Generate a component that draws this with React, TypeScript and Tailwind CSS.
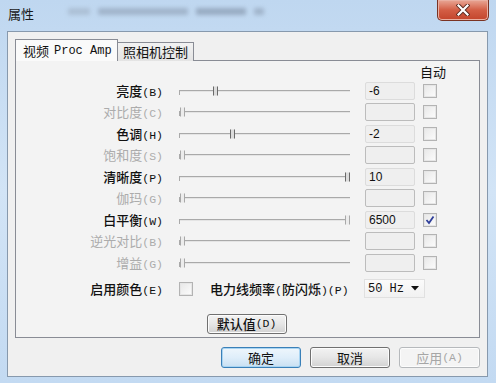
import React from "react";

type Row = {
  zh: string;
  k: string;
  enabled: boolean;
  thumb: number;
  value?: string;
  auto?: boolean;
  thumbLight?: boolean;
};

const rows: Row[] = [
  { zh: "亮度", k: "B", enabled: true, thumb: 36, value: "-6" },
  { zh: "对比度", k: "C", enabled: false, thumb: 3 },
  { zh: "色调", k: "H", enabled: true, thumb: 53, value: "-2" },
  { zh: "饱和度", k: "S", enabled: false, thumb: 3 },
  { zh: "清晰度", k: "P", enabled: true, thumb: 168, value: "10" },
  { zh: "伽玛", k: "G", enabled: false, thumb: 3 },
  { zh: "白平衡", k: "W", enabled: true, thumb: 168, value: "6500", auto: true, thumbLight: true },
  { zh: "逆光对比", k: "B", enabled: false, thumb: 3 },
  { zh: "增益", k: "G", enabled: false, thumb: 3 },
];

function Label({ zh, k, enabled }: { zh: string; k: string; enabled: boolean }) {
  return (
    <span
      className={
        "whitespace-nowrap " + (enabled ? "text-[#111111] font-medium" : "text-[#acacac]")
      }
    >
      <span className="text-[13px] font-['Noto_Sans_CJK_SC','Noto_Sans',sans-serif]">{zh}</span>
      <span className="text-[11.5px] font-['Liberation_Mono',monospace]">({k})</span>
    </span>
  );
}

function Slider({ pos, enabled, light }: { pos: number; enabled: boolean; light?: boolean }) {
  const dark = enabled && !light;
  return (
    <div className="relative h-full w-[174px] flex items-center">
      <div className="ml-[2px] w-[171px] h-[2px] border-t border-[#a9a9a9] bg-[#e4e4e4]" />
      <div className="absolute left-[2px] top-1/2 w-px h-[4px] bg-[#a9a9a9]" />
      <div
        className={
          "absolute top-1/2 -translate-y-1/2 w-[5px] h-[9px] border-x " +
          (dark ? "border-[#6a6a6a] bg-[#dcdcdc]" : "border-[#a8a8a8] bg-[#ececec]")
        }
        style={{ left: pos }}
      />
    </div>
  );
}

function Check({ checked }: { checked?: boolean }) {
  return (
    <div className="w-[14px] h-[14px] border border-[#b3b3b3] bg-[#f6f6f6] flex items-center justify-center">
      <div className="w-[12px] h-[12px] border border-[#e6e6e6] bg-gradient-to-br from-[#e9e9e9] to-[#fbfbfb] flex items-center justify-center">
        {checked && (
          <svg width="10" height="10" viewBox="0 0 10 10">
            <path d="M1.5 5 L4 8 L8.5 1.5" stroke="#2f3f9a" strokeWidth="1.8" fill="none" />
          </svg>
        )}
      </div>
    </div>
  );
}

function Btn({
  children,
  primary,
  disabled,
  w,
}: {
  children: React.ReactNode;
  primary?: boolean;
  disabled?: boolean;
  w: string;
}) {
  const border = primary
    ? "border-[#3a80b8]"
    : disabled
    ? "border-[#b6b9bc]"
    : "border-[#707070]";
  const bg = disabled
    ? "bg-[#f4f4f4]"
    : primary
    ? "bg-gradient-to-b from-[#eef6fc] via-[#dfeefa] to-[#c9e0f2]"
    : "bg-gradient-to-b from-[#f3f3f3] via-[#e6e6e6] to-[#d2d2d2]";
  return (
    <div
      className={`${w} h-[21px] rounded-[3px] border ${border} ${bg} flex items-center justify-center text-[13px] font-['Noto_Sans_CJK_SC','Noto_Sans',sans-serif] ${
        disabled ? "text-[#a6a6a6]" : "text-[#111111]"
      } ${primary ? "shadow-[inset_0_0_0_1px_#a8d4f2]" : "shadow-[inset_0_0_0_1px_#fcfcfc]"}`}
    >
      {children}
    </div>
  );
}

export default function App() {
  return (
    <div className="w-[496px] h-[383px] overflow-hidden bg-gradient-to-b from-[#bfd7f0] via-[#d2e4f6] to-[#c3daf2] flex flex-col font-['Noto_Sans_CJK_SC','Noto_Sans',sans-serif]">
      {/* Title bar */}
      <div className="h-[31px] flex items-start relative">
        <div className="ml-[8px] mt-[5px] text-[13px] text-[#1a1a1a] leading-[18px]">属性</div>
        <div className="ml-[34px] mt-[8px] flex items-center gap-[8px] blur-[2px] opacity-60">
          <div className="w-[22px] h-[7px] bg-[#9fb0c4]" />
          <div className="w-[90px] h-[7px] bg-[#8c9db2]" />
          <div className="w-[50px] h-[7px] bg-[#7d8ea3]" />
          <div className="w-[10px] h-[7px] bg-[#8c9db2]" />
        </div>
        <div className="ml-auto mr-[7px] w-[52px] h-[21px] rounded-b-[5px] border border-t-0 border-[#7a3323] bg-gradient-to-b from-[#e8a796] via-[#d35e45] to-[#c3442b] flex items-center justify-center shadow-[inset_0_0_0_1px_#eab0a2]">
          <svg width="14" height="12" viewBox="0 0 14 12">
            <path d="M2.5 1.5 L11.5 10.5 M11.5 1.5 L2.5 10.5" stroke="#5a2a20" strokeWidth="4" strokeLinecap="square" />
            <path d="M2.5 1.5 L11.5 10.5 M11.5 1.5 L2.5 10.5" stroke="#ffffff" strokeWidth="2.2" strokeLinecap="square" />
          </svg>
        </div>
      </div>

      {/* Client area */}
      <div className="ml-[7px] mr-[8px] h-[346px] border border-[#8799ad] bg-[#f0f0f0] flex flex-col pl-[7px] pr-[7px]">
        {/* Tabs */}
        <div className="mt-[7px] h-[22px] flex items-end relative z-10 -mb-px">
          <div className="w-[103px] h-[22px] border border-b-0 border-[#898c95] bg-[#fafafa] flex items-center pl-[7px] text-[#111111]">
            <span className="text-[13px]">视频</span>
            <span className="ml-[5px] text-[12px] font-['Liberation_Mono',monospace]">Proc Amp</span>
          </div>
          <div className="w-[76px] h-[19px] border border-l-0 border-b-0 border-[#898c95] bg-gradient-to-b from-[#f2f2f2] to-[#e3e3e3] flex items-center justify-center text-[13px] text-[#111111]">
            照相机控制
          </div>
        </div>

        {/* Pane */}
        <div className="h-[278px] border border-[#898c95] bg-[#f3f3f3] flex flex-col">
          <div className="mt-[3px] h-[16px] flex items-center">
            <span className="ml-[404px] text-[13px] text-[#111111] leading-[16px]">自动</span>
          </div>
          {rows.map((r, i) => (
            <div key={i} className="h-[21.5px] flex items-center">
              <div className="w-[149px] pr-[2px] text-right leading-[16px]">
                <Label zh={r.zh} k={r.k} enabled={r.enabled} />
              </div>
              <div className="ml-[12px] h-full">
                <Slider pos={r.thumb} enabled={r.enabled} light={r.thumbLight} />
              </div>
              <div
                className={
                  "ml-[14px] w-[50px] h-[18px] rounded-[2px] border bg-[#efefef] flex items-center pl-[3px] text-[12px] text-[#111111] font-['Liberation_Sans',sans-serif] " +
                  (r.value ? "border-[#dcdcdc]" : "border-[#bcbcbc]")
                }
              >
                {r.value}
              </div>
              <div className="ml-[8px]">
                <Check checked={r.auto} />
              </div>
            </div>
          ))}
          <div className="h-[30px] flex items-center">
            <div className="w-[149px] pr-[2px] text-right leading-[16px]">
              <Label zh="启用颜色" k="E" enabled={true} />
            </div>
            <div className="ml-[14px]">
              <Check />
            </div>
            <div className="ml-[17px] w-[154px] leading-[16px] whitespace-nowrap text-[#111111] font-medium">
              <span className="text-[13px]">电力线频率</span>
              <span className="text-[11.5px] font-['Liberation_Mono',monospace]">(</span>
              <span className="text-[13px]">防闪烁</span>
              <span className="text-[11.5px] font-['Liberation_Mono',monospace]">)(P)</span>
            </div>
            <div className="w-[61px] h-[19px] border border-[#e0e0e0] bg-gradient-to-b from-[#fbfbfb] to-[#f1f1f1] flex items-center pl-[3px] pr-[5px]">
              <span className="text-[12px] text-[#111111] font-['Liberation_Mono',monospace]">50 Hz</span>
              <svg className="ml-auto" width="8" height="5" viewBox="0 0 8 5">
                <path d="M0 0 L8 0 L4 4.5 Z" fill="#111111" />
              </svg>
            </div>
          </div>
          <div className="mt-[10px] flex justify-center pl-[2px]">
            <div className="ml-[-4px] w-[80px] h-[20px] rounded-[3px] border border-[#707070] bg-gradient-to-b from-[#f3f3f3] via-[#e6e6e6] to-[#d2d2d2] shadow-[inset_0_0_0_1px_#fcfcfc] flex items-center justify-center text-[#111111] font-medium">
              <span className="text-[13px]">默认值</span>
              <span className="text-[11.5px] font-['Liberation_Mono',monospace]">(D)</span>
            </div>
          </div>
        </div>

        {/* Bottom buttons */}
        <div className="mt-[9px] flex justify-end gap-[9px]">
          <Btn w="w-[80px]" primary>
            确定
          </Btn>
          <Btn w="w-[80px]">取消</Btn>
          <Btn w="w-[81px]" disabled>
            <span>应用</span>
            <span className="text-[11.5px] font-['Liberation_Mono',monospace]">(A)</span>
          </Btn>
        </div>
      </div>
    </div>
  );
}
